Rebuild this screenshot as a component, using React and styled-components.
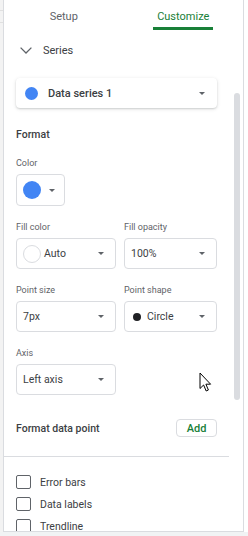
import React from 'react'
import styled, {createGlobalStyle} from 'styled-components'

const Global = createGlobalStyle`
  html, body {
    margin: 0;
    padding: 0;
    background: #ffffff;
  }
  body {
    font-family: Roboto, "Noto Sans", Arial, sans-serif;
    color: #3c4043;
  }
`

const Frame = styled.div`
  position: relative;
  width: 248px;
  height: 536px;
  display: flex;
  flex-direction: column;
  overflow: hidden;
`
const Row = styled.div`
  display: flex;
  height: 532px;
`
const SheetEdge = styled.div`
  width: 3px;
  background: #f3f3f3;
  background-image: linear-gradient(#e0e0e0, #e0e0e0), linear-gradient(#e0e0e0, #e0e0e0);
  background-size: 3px 1px, 3px 1px;
  background-position: 0 10px, 0 22px;
  background-repeat: no-repeat;
`
const BottomEdge = styled.div`
  height: 4px;
  background: #f1f3f4;
`
const RightEdge = styled.div`
  flex: 1;
  background: #ffffff;
`
const Panel = styled.div`
  width: 239px;
  border-left: 1px solid #dadce0;
  border-right: 1px solid #dadce0;
  border-bottom: 1px solid #dadce0;
  display: flex;
  flex-direction: column;
  background: #ffffff;
`
const Tabs = styled.div`
  display: flex;
  height: 30px;
`
const Tab = styled.div`
  flex: 1;
  display: flex;
  justify-content: center;
  align-items: flex-end;
`
const TabLabel = styled.span`
  display: block;
  padding: 10px 4px 4px;
  font-size: 11px;
  line-height: 13px;
  color: ${p => p.active ? '#188038' : '#5f6368'};
  border-bottom: 3px solid ${p => p.active ? '#188038' : 'transparent'};
`
const Body = styled.div`
  flex: 1;
  display: flex;
  overflow: hidden;
`
const Content = styled.div`
  width: 225px;
  padding-top: 10px;
`
const Track = styled.div`
  flex: 1;
  display: flex;
  justify-content: center;
  padding-left: 1px;
`
const Thumb = styled.div`
  width: 6px;
  height: 307px;
  margin-top: 63px;
  border-radius: 3px;
  background: #dadce0;
`
const Inner = styled.div`
  padding: 0 8px 0 12px;
  width: 201px;
`
const SeriesHeader = styled.div`
  display: flex;
  align-items: center;
  height: 20px;
  padding-left: 4px;
  gap: 11px;
  font-size: 11px;
  color: #3c4043;
`
const SeriesCard = styled.div`
  margin-top: 18px;
  height: 30px;
  border-radius: 4px;
  box-shadow: 0 1px 2px rgba(60, 64, 67, 0.2), 0 1px 4px rgba(60, 64, 67, 0.1);
  display: flex;
  align-items: center;
  padding: 0 12px 0 9px;
  font-size: 11px;
  font-weight: 500;
  color: #3c4043;
`
const Dot = styled.span`
  display: inline-block;
  flex: none;
  width: ${p => p.size}px;
  height: ${p => p.size}px;
  border-radius: 50%;
  box-sizing: border-box;
  background: ${p => p.color};
  border: ${p => p.outline ? '1px solid #dadce0' : 'none'};
`
const Grow = styled.span`
  flex: 1;
  margin-left: ${p => p.gap || 0}px;
`
const Caret = styled.span`
  width: 0;
  height: 0;
  border-left: 3px solid transparent;
  border-right: 3px solid transparent;
  border-top: 3px solid #5f6368;
`
const Title = styled.div`
  margin-top: 20px;
  margin-bottom: 3px;
  font-size: 10.5px;
  line-height: 14px;
  font-weight: 500;
  color: #3c4043;
`
const Field = styled.div`
  margin-top: 15px;
`
const Pair = styled.div`
  display: grid;
  grid-template-columns: 100px 93px;
  column-gap: 8px;
`
const Label = styled.div`
  font-size: 9px;
  line-height: 12px;
  color: #5f6368;
  margin-bottom: 5px;
`
const ColorButton = styled.div`
  width: 49px;
  height: 32px;
  box-sizing: border-box;
  border: 1px solid #dadce0;
  border-radius: 4px;
  display: flex;
  align-items: center;
  padding: 0 10px 0 6px;
  gap: 8px;
`
const Select = styled.div`
  width: ${p => p.width ? p.width + 'px' : 'auto'};
  height: 31px;
  box-sizing: border-box;
  border: 1px solid #dadce0;
  border-radius: 4px;
  display: flex;
  align-items: center;
  padding: 0 11px 0 6px;
  font-size: 10.5px;
  color: #3c4043;
`
const PointRow = styled.div`
  margin-top: 24px;
  display: flex;
  align-items: center;
  justify-content: space-between;
  font-size: 10.5px;
  font-weight: 500;
  color: #3c4043;
`
const AddButton = styled.div`
  width: 41px;
  height: 18px;
  box-sizing: border-box;
  border: 1px solid #dadce0;
  border-radius: 4px;
  display: flex;
  align-items: center;
  justify-content: center;
  font-size: 11px;
  font-weight: 500;
  color: #188038;
`
const Divider = styled.div`
  margin-top: 19px;
  height: 1px;
  background: #dadce0;
`
const Checks = styled.div`
  margin-top: 14px;
  padding-left: 12px;
`
const CheckRow = styled.div`
  height: 22px;
  display: flex;
  align-items: center;
  gap: 9px;
  font-size: 10.5px;
  color: #3c4043;
`
const Box = styled.span`
  width: 15px;
  height: 14px;
  box-sizing: border-box;
  border: 1.5px solid #5f6368;
  border-radius: 2px;
`
const Pointer = styled.svg`
  position: absolute;
  left: 199px;
  top: 372px;
`

const Chevron = () => (
  <svg width="12" height="7" viewBox="0 0 12 7">
    <path d="M0.6 0.6 L6 6 L11.4 0.6" fill="none" stroke="#5f6368" strokeWidth="1.3"/>
  </svg>
)

const checks = ['Error bars', 'Data labels', 'Trendline']

export default function App() {
  return (
    <Frame>
      <Global/>
      <Row>
        <SheetEdge/>
        <Panel>
          <Tabs>
            <Tab><TabLabel>Setup</TabLabel></Tab>
            <Tab><TabLabel active>Customize</TabLabel></Tab>
          </Tabs>
          <Body>
            <Content>
              <Inner>
                <SeriesHeader>
                  <Chevron/>
                  <span>Series</span>
                </SeriesHeader>
                <SeriesCard>
                  <Dot size={13} color="#4285f4"/>
                  <Grow gap={10}>Data series 1</Grow>
                  <Caret/>
                </SeriesCard>

                <Title>Format</Title>

                <Field>
                  <Label>Color</Label>
                  <ColorButton>
                    <Dot size={18} color="#4285f4"/>
                    <Caret/>
                  </ColorButton>
                </Field>

                <Field>
                  <Pair>
                    <div>
                      <Label>Fill color</Label>
                      <Select>
                        <Dot size={18} color="#ffffff" outline/>
                        <Grow gap={3}>Auto</Grow>
                        <Caret/>
                      </Select>
                    </div>
                    <div>
                      <Label>Fill opacity</Label>
                      <Select>
                        <Grow>100%</Grow>
                        <Caret/>
                      </Select>
                    </div>
                  </Pair>
                </Field>

                <Field>
                  <Pair>
                    <div>
                      <Label>Point size</Label>
                      <Select>
                        <Grow>7px</Grow>
                        <Caret/>
                      </Select>
                    </div>
                    <div>
                      <Label>Point shape</Label>
                      <Select>
                        <Dot size={8} color="#202124" style={{marginLeft: 2}}/>
                        <Grow gap={6}>Circle</Grow>
                        <Caret/>
                      </Select>
                    </div>
                  </Pair>
                </Field>

                <Field>
                  <Label>Axis</Label>
                  <Select width={100}>
                    <Grow>Left axis</Grow>
                    <Caret/>
                  </Select>
                </Field>

                <PointRow>
                  <span>Format data point</span>
                  <AddButton>Add</AddButton>
                </PointRow>
              </Inner>
              <Divider/>
              <Checks>
                {checks.map(c => (
                  <CheckRow key={c}>
                    <Box/>
                    <span>{c}</span>
                  </CheckRow>
                ))}
              </Checks>
            </Content>
            <Track>
              <Thumb/>
            </Track>
          </Body>
        </Panel>
        <RightEdge/>
      </Row>
      <BottomEdge/>
      <Pointer width="13" height="21" viewBox="0 0 13 21">
        <path d="M1 1 L1 16.5 L4.6 13 L7.2 19 L9.4 18 L6.9 12.2 L11.6 12.2 Z" fill="#ffffff" stroke="#000000" strokeWidth="1" strokeLinejoin="round"/>
      </Pointer>
    </Frame>
  )
}
